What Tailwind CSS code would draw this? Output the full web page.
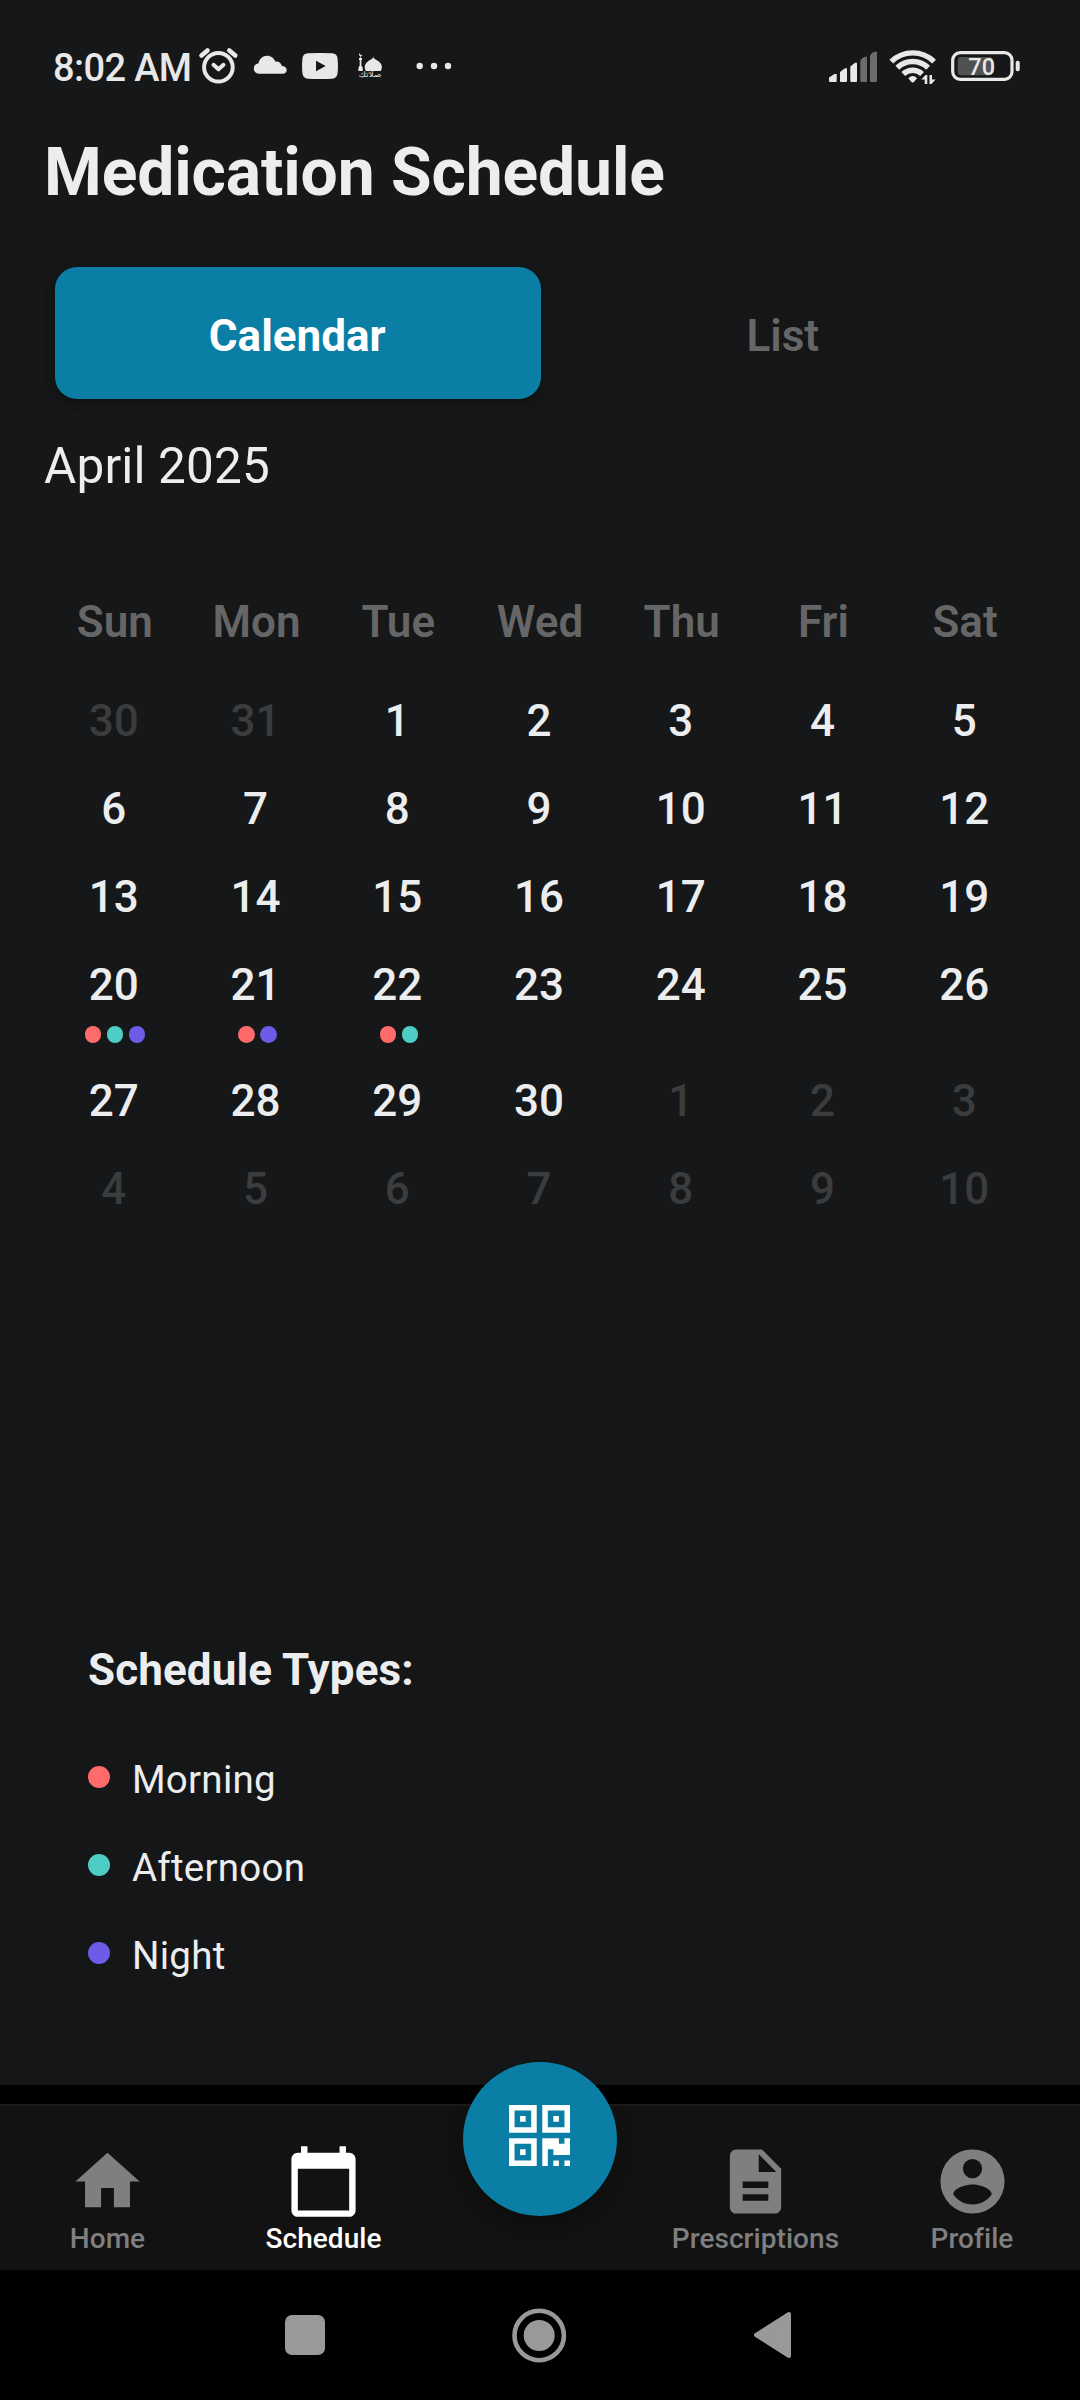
<!DOCTYPE html>
<html lang="en">
<head>
<meta charset="utf-8">
<title>Medication Schedule</title>
<script src="https://cdn.jsdelivr.net/npm/@tailwindcss/browser@4"></script>
</head>
<body class="flex h-[2400px] w-[1080px] flex-col overflow-hidden bg-black font-['Roboto',sans-serif] text-[#ecedee]">

<!-- Screen content -->
<main class="flex h-[2085px] flex-none flex-col bg-[#151718]">

  <!-- Status bar -->
  <header class="flex h-[132px] flex-none items-start pt-[44px] text-[#e8e8e8]">
    <div class="ml-[53px] w-[140px] whitespace-nowrap text-[38px] leading-[48px] font-medium tracking-[-0.6px]">8:02 AM</div>
    <svg class="ml-[5px] h-[42px] w-[42px]" viewBox="198 44 42 42" fill="none" stroke="currentColor" stroke-width="4" stroke-linecap="round" stroke-linejoin="round">
      <circle cx="218.4" cy="67.3" r="14.3"/>
      <path d="M201.5 55.5 207.5 50.5M229.3 50.5 235.3 55.5" stroke-width="4.6"/>
      <path d="M213.5 64.8 218.5 69.3 223.5 64.8"/>
    </svg>
    <svg class="ml-[13px] h-[42px] w-[34px]" viewBox="253 44 34 42" fill="currentColor">
      <path d="M259 73.8a5 5 0 0 1-5.2-5.2c0-2.900 2-4.800 4.600-5 .9-4.700 4.200-7.900 8.600-7.900 3.900 0 7 2.200 8.300 5.800 3.500-.5 6 1.400 6.500 4.500 3 .1 4.900 1.600 4.900 4 0 2.200-1.700 3.800-4.200 3.800z"/>
    </svg>
    <svg class="ml-[15px] h-[42px] w-[36px]" viewBox="302 44 36 42" fill="currentColor">
      <path fill-rule="evenodd" d="M308 53.300Q320 52.600 332 53.300 337.300 53.600 337.600 59 338.300 66 337.600 73 337.300 78.400 332 78.700 320 79.400 308 78.700 302.700 78.400 302.400 73 301.700 66 302.400 59 302.700 53.600 308 53.300ZM316 60.700V71.300L325.700 66Z"/>
    </svg>
    <svg class="ml-[20px] h-[42px] w-[25px]" viewBox="358 44 25 42" fill="currentColor">
      <path d="M359.800 52.800c-.3 1.700.8 2.700 2.600 1.800-.4 1.200-1 1.700-1.600 1.800v1.500h1.200v2h-.6v5.600l1.400 2.200v3.300h-4.400v-3.300l1.300-2.200v-5.600H359v-2h1.200v-1.500c-1.300-.6-1.500-2.500-.4-3.600z"/>
      <path d="M373.300 56.500c.4 2.700 3.200 3.300 5.400 4.900 2.300 1.700 3.200 3.600 3.200 5.800 0 1.500-.4 2.800-1.200 3.800h-14.800c-.8-1-1.200-2.300-1.200-3.800 0-2.200.9-4.100 3.200-5.800 2.200-1.600 5-2.200 5.400-4.900z"/>
      <text x="358.500" y="77" font-family="DejaVu Sans, sans-serif" font-size="7.500" textLength="23" lengthAdjust="spacingAndGlyphs">صلاتك</text>
    </svg>
    <svg class="ml-[32px] h-[42px] w-[38px]" viewBox="415 44 38 42" fill="currentColor">
      <circle cx="419.700" cy="66" r="3.200"/><circle cx="434" cy="66" r="3.200"/><circle cx="448" cy="66" r="3.200"/>
    </svg>
    <svg class="ml-[375px] h-[42px] w-[50px]" viewBox="828 44 50 42" fill="currentColor">
      <path d="M829 77.500 834.500 74H836.700V81Q836.700 82 835.700 82H830Q829 82 829 81ZM840 72 845 68.300H847V81Q847 82 846 82H841Q840 82 840 81ZM850.300 66.500 855 62.700H857V81Q857 82 856 82H851.300Q850.300 82 850.300 81Z"/>
      <path fill="#6b6c6c" d="M860.300 60.500Q862 57.500 865 56.700H867V81Q867 82 866 82H861.300Q860.300 82 860.300 81ZM870 55.500Q872 52 875 51.700H877V81Q877 82 876 82H871Q870 82 870 81Z"/>
    </svg>
    <svg class="ml-[11px] h-[42px] w-[48px]" viewBox="889 44 48 42" fill="none" stroke="currentColor" stroke-width="5.400">
      <path d="M891.300 61.600A30.500 30.500 0 0 1 934.100 61.600M897.300 67.800A22 22 0 0 1 928.100 67.800M903.300 74A13.500 13.500 0 0 1 922.100 74"/>
      <path fill="currentColor" stroke="none" d="M908.300 78.300Q912.700 73.500 917.100 78.300L913.700 82.200Q912.700 83 911.700 82.200Z"/>
      <path fill="currentColor" stroke="none" d="M927.300 75V84H924.700V79.500L921.300 79.500 925.500 75ZM929.500 75H932V79.500L935.500 79.500 931.500 84H929.500Z"/>
    </svg>
    <svg class="ml-[13px] h-[42px] w-[72px]" viewBox="950 44 72 42">
      <rect x="957.700" y="57" width="34.800" height="18.300" rx="3" fill="#505151"/>
      <rect x="952.700" y="52.700" width="59.300" height="26.600" rx="7.500" fill="none" stroke="currentColor" stroke-width="3.200"/>
      <rect x="1015.700" y="60.700" width="4" height="10.500" rx="1.800" fill="currentColor"/>
      <text x="981.700" y="75.300" text-anchor="middle" font-family="Roboto, sans-serif" font-weight="500" font-size="23.500" fill="currentColor">70</text>
    </svg>
  </header>

  <h1 class="mt-px -mb-px ml-[44px] text-[66px] leading-[80px] font-bold tracking-[-0.12px]">Medication Schedule</h1>

  <!-- View switch -->
  <div class="mx-[44px] mt-[44px] flex h-[154px] rounded-[33px] bg-[#141617] p-[11px] text-[44px]">
    <div class="flex flex-1 items-center justify-center rounded-[22px] bg-[#0a7ea4] pt-[6px] pr-px font-bold text-white shadow-[0_3px_8px_rgba(0,0,0,0.3)]">Calendar</div>
    <div class="flex flex-1 items-center justify-center pt-[6px] font-semibold text-[#666]">List</div>
  </div>

  <h2 class="mt-[26px] ml-[44px] text-[49.5px] leading-[60px] tracking-[0.15px]">April 2025</h2>

  <!-- Month grid -->
  <section class="mx-[44px] mt-[96px] text-[44px] leading-[60px] font-medium">
    <div class="grid grid-cols-7 text-center text-[#666] font-semibold">
      <div>Sun</div><div>Mon</div><div>Tue</div><div>Wed</div><div>Thu</div><div>Fri</div><div>Sat</div>
    </div>
    <div class="mt-[39px] mr-px -ml-px grid grid-cols-7 grid-rows-[88px_88px_88px_116px_88px_88px] text-center">
      <div class="text-[#3b3c3e]">30</div><div class="text-[#3b3c3e]">31</div><div>1</div><div>2</div><div>3</div><div>4</div><div>5</div>
      <div>6</div><div>7</div><div>8</div><div>9</div><div>10</div><div>11</div><div>12</div>
      <div>13</div><div>14</div><div>15</div><div>16</div><div>17</div><div>18</div><div>19</div>
      <div>20
        <div class="mt-[11px] ml-[2px] flex justify-center gap-[5.500px]">
          <i class="size-[16.500px] rounded-full bg-[#ff6b6b]"></i><i class="size-[16.500px] rounded-full bg-[#4ecdc4]"></i><i class="size-[16.500px] rounded-full bg-[#6c5ce7]"></i>
        </div>
      </div>
      <div>21
        <div class="mt-[11px] ml-[4px] flex justify-center gap-[5.500px]">
          <i class="size-[16.500px] rounded-full bg-[#ff6b6b]"></i><i class="size-[16.500px] rounded-full bg-[#6c5ce7]"></i>
        </div>
      </div>
      <div>22
        <div class="mt-[11px] ml-[3px] flex justify-center gap-[5.500px]">
          <i class="size-[16.500px] rounded-full bg-[#ff6b6b]"></i><i class="size-[16.500px] rounded-full bg-[#4ecdc4]"></i>
        </div>
      </div>
      <div>23</div><div>24</div><div>25</div><div>26</div>
      <div>27</div><div>28</div><div>29</div><div>30</div><div class="text-[#3b3c3e]">1</div><div class="text-[#3b3c3e]">2</div><div class="text-[#3b3c3e]">3</div>
      <div class="text-[#3b3c3e]">4</div><div class="text-[#3b3c3e]">5</div><div class="text-[#3b3c3e]">6</div><div class="text-[#3b3c3e]">7</div><div class="text-[#3b3c3e]">8</div><div class="text-[#3b3c3e]">9</div><div class="text-[#3b3c3e]">10</div>
    </div>
  </section>

  <!-- Legend -->
  <section class="mx-[44px] mt-auto mb-[45px] h-[450px] rounded-[33px] bg-[#141617] px-[44px] pt-[50px]">
    <h3 class="text-[44px] leading-[60px] font-bold tracking-[0.1px]">Schedule Types:</h3>
    <ul class="mt-[58px] flex flex-col gap-[44px] text-[38.500px] leading-[44px] tracking-[0.25px]">
      <li class="flex items-center gap-[22px]"><i class="-mt-[6px] size-[22px] rounded-full bg-[#ff6b6b]"></i>Morning</li>
      <li class="flex items-center gap-[22px]"><i class="-mt-[6px] size-[22px] rounded-full bg-[#4ecdc4]"></i>Afternoon</li>
      <li class="flex items-center gap-[22px]"><i class="-mt-[6px] size-[22px] rounded-full bg-[#6c5ce7]"></i>Night</li>
    </ul>
  </section>
</main>

<!-- Tab bar -->
<nav class="relative mt-[19px] grid h-[166px] flex-none grid-cols-5 border-t-2 border-[#1a1a1a] bg-[#121212] pt-[37px] text-center text-[28px] leading-[32px] font-medium tracking-[0.05px] text-[#7f7f7f]">
  <div class="flex flex-col items-center gap-[3px] pr-px">
    <svg class="size-[77px]" viewBox="0 0 24 24" fill="currentColor"><path d="M10 20V14H14V20H19V12H22L12 3 2 12H5V20Z"/></svg>
    <span>Home</span>
  </div>
  <div class="flex flex-col items-center gap-[3px] pr-px text-white">
    <svg class="size-[77px]" viewBox="0 0 24 24" fill="currentColor"><path d="M20 3h-1V1h-2v2H7V1H5v2H4c-1.100 0-2 .9-2 2v16c0 1.100.9 2 2 2h16c1.100 0 2-.9 2-2V5c0-1.100-.9-2-2-2zm0 18H4V8h16v13z"/></svg>
    <span>Schedule</span>
  </div>
  <div></div>
  <div class="flex flex-col items-center gap-[3px] pr-px">
    <svg class="size-[77px]" viewBox="0 0 24 24" fill="currentColor"><path d="M14 2H6c-1.100 0-1.990.9-1.990 2L4 20c0 1.100.89 2 1.990 2H18c1.100 0 2-.9 2-2V8l-6-6zm2 16H8v-2h8v2zm0-4H8v-2h8v2zm-3-5V3.500L18.500 9H13z"/></svg>
    <span>Prescriptions</span>
  </div>
  <div class="flex flex-col items-center gap-[3px]">
    <svg class="size-[77px]" viewBox="0 0 24 24" fill="currentColor"><path fill-rule="evenodd" d="M12 19.200C9.500 19.200 7.290 17.920 6 16 6.030 14 10 12.900 12 12.900S17.970 14 18 16C16.710 17.920 14.500 19.200 12 19.200M12 5A3 3 0 0 1 15 8 3 3 0 0 1 12 11 3 3 0 0 1 9 8 3 3 0 0 1 12 5M12 2A10 10 0 0 0 2 12 10 10 0 0 0 12 22 10 10 0 0 0 22 12 10 10 0 0 0 12 2Z"/></svg>
    <span>Profile</span>
  </div>

  <!-- Scan button -->
  <div class="absolute -top-[44px] left-[463px] flex size-[154px] items-center justify-center rounded-full bg-[#0a7ea4] pr-[2px] pb-[7px] shadow-[0_8px_20px_rgba(0,0,0,0.3)]">
    <svg class="size-[61px]" viewBox="0 0 11 11" fill="white"><path fill-rule="evenodd" d="M0 0H5V5H0ZM1 1V4H4V1ZM2 2H3V3H2ZM6 0H11V5H6ZM7 1V4H10V1ZM8 2H9V3H8ZM0 6H5V11H0ZM1 7V10H4V7ZM2 8H3V9H2ZM6 6H9V7H10V6H11V9H8V8H7V11H6ZM8 10H9V11H8ZM10 10H11V11H10Z"/></svg>
  </div>
</nav>

<!-- System navigation -->
<footer class="grid h-[130px] flex-none grid-cols-[285px_40px_187px_55px_187px_38px] items-center">
  <div class="col-start-2 size-[39.500px] rounded-[7px] bg-[#999]"></div>
  <svg class="col-start-4 h-[55px] w-[55px]" viewBox="0 0 55 55"><circle cx="27.200" cy="27.500" r="24.700" fill="none" stroke="#999" stroke-width="4.600"/><circle cx="27.200" cy="27.500" r="15.500" fill="#999"/></svg>
  <svg class="col-start-6 h-[48px] w-[38px]" viewBox="0 0 38 48"><path d="M2 24 35 3V45Z" fill="#999" stroke="#999" stroke-width="4" stroke-linejoin="round"/></svg>
</footer>
</body>
</html>
